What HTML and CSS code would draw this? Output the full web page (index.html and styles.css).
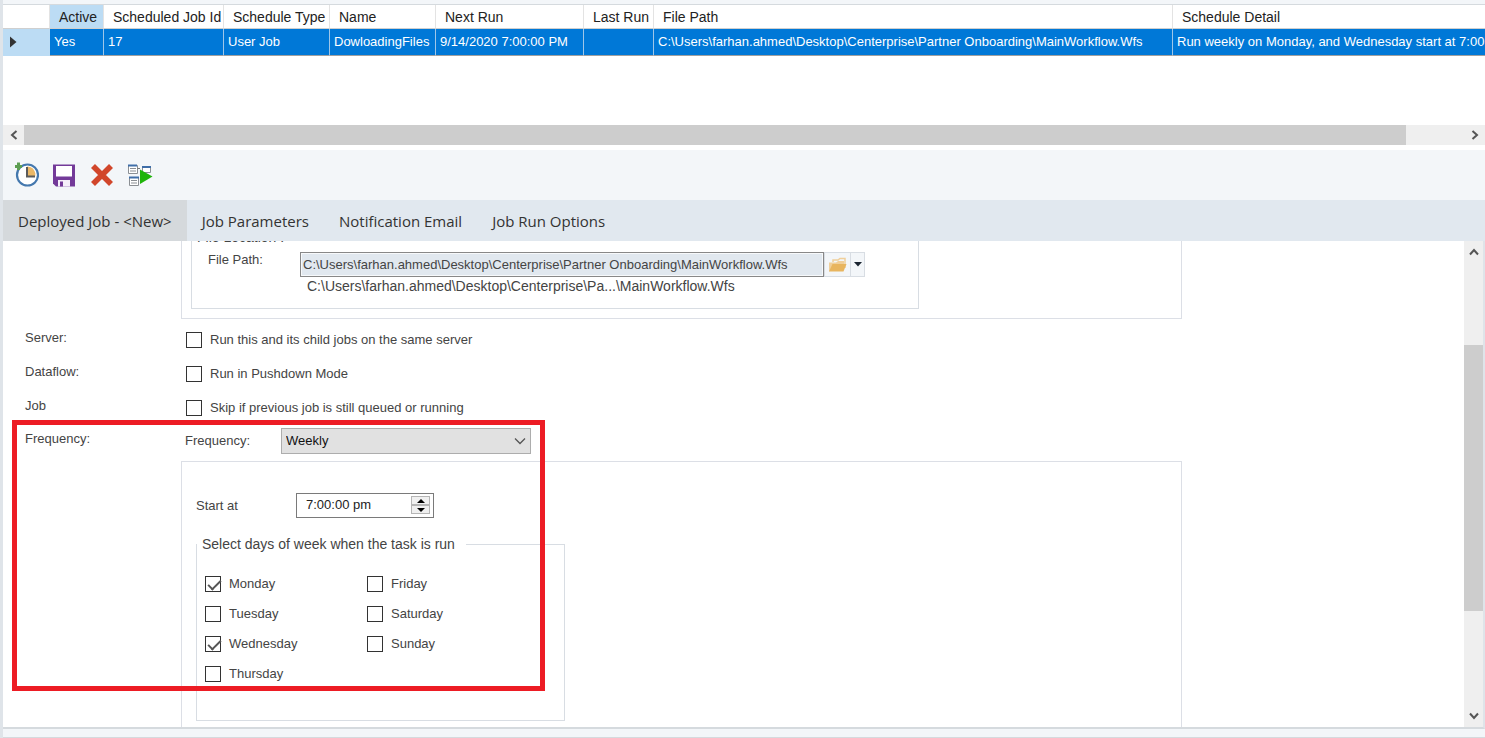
FILE: index.html
```html
<!DOCTYPE html>
<html lang="en">
<head>
    <meta charset="UTF-8">
    <meta name="viewport" content="width=device-width, initial-scale=1.0">
    <title>Job Scheduler</title>
    <link rel="stylesheet" href="styles.css">
</head>
<body>
    <div class="app">
        <div class="grid">
            <table class="jobs">
                <colgroup>
                    <col class="col-marker">
                    <col class="col-active">
                    <col class="col-id">
                    <col class="col-type">
                    <col class="col-name">
                    <col class="col-next">
                    <col class="col-last">
                    <col class="col-path">
                    <col class="col-detail">
                </colgroup>
                <thead>
                    <tr>
                        <th></th>
                        <th class="current">Active</th>
                        <th>Scheduled Job Id</th>
                        <th>Schedule Type</th>
                        <th>Name</th>
                        <th>Next Run</th>
                        <th>Last Run</th>
                        <th>File Path</th>
                        <th>Schedule Detail</th>
                    </tr>
                </thead>
                <tbody>
                    <tr>
                        <td class="marker"><svg width="8" height="12" viewBox="0 0 8 12"><path d="M1 0.5L7.5 6L1 11.5Z" fill="#333"/></svg></td>
                        <td>Yes</td>
                        <td>17</td>
                        <td>User Job</td>
                        <td>DowloadingFiles</td>
                        <td>9/14/2020 7:00:00 PM</td>
                        <td></td>
                        <td>C:\Users\farhan.ahmed\Desktop\Centerprise\Partner Onboarding\MainWorkflow.Wfs</td>
                        <td>Run weekly on Monday, and Wednesday start at 7:00 PM</td>
                    </tr>
                </tbody>
            </table>
        </div>
        <div class="hscroll">
            <button type="button" class="arrow" aria-label="Scroll left"><svg width="10" height="10" viewBox="0 0 10 10"><path d="M7.5 1L3 5L7.5 9"/></svg></button>
            <div class="track"><div class="thumb"></div></div>
            <button type="button" class="arrow" aria-label="Scroll right"><svg width="10" height="10" viewBox="0 0 10 10"><path d="M2.5 1L7 5L2.5 9"/></svg></button>
        </div>

        <div class="toolbar">
            <button type="button" aria-label="New job">
                <svg width="26" height="26" viewBox="0 0 26 26">
                    <circle cx="14.5" cy="13" r="10.5" fill="#fff" stroke="#4478ae" stroke-width="2.2"/>
                    <path d="M14 4.500A8 8 0 0 1 22 15H14Z" fill="#ebb867"/>
                    <path d="M14 5V14.500H22" fill="none" stroke="#5b5b5b" stroke-width="2"/>
                    <path d="M5.500 0.500V8M2 4.500H9" stroke="#5c9e52" stroke-width="3"/>
                </svg>
            </button>
            <button type="button" aria-label="Save">
                <svg width="26" height="26" viewBox="0 0 26 26">
                    <path d="M2 2.500H24V24.500H5L2 21.500Z" fill="#733a99"/>
                    <path d="M5 4H21V14.500H5Z" fill="#fff"/>
                    <path d="M7 18H19V24.500H7Z" fill="#f5effa"/>
                    <path d="M9 19.500H12V24.500H9Z" fill="#733a99"/>
                </svg>
            </button>
            <button type="button" aria-label="Delete">
                <svg width="26" height="26" viewBox="0 0 26 26">
                    <path d="M4 4L22 22M22 4L4 22" stroke="#d1462b" stroke-width="5.600"/>
                </svg>
            </button>
            <button type="button" aria-label="Run job">
                <svg width="26" height="26" viewBox="0 0 26 26">
                    <path d="M1.500 3.500H10.500V11.500H1.500Z" fill="#fff" stroke="#8b8f94"/>
                    <path d="M1 3.500H10" stroke="#3f6ea8" stroke-width="2"/>
                    <path d="M3 6.500H9M3 9H9" stroke="#8b8f94"/>
                    <path d="M10.500 6.500H13" stroke="#777"/>
                    <path d="M15.500 5.500H23.500V10.500H15.500Z" fill="#fff" stroke="#8b8f94"/>
                    <path d="M15 5H24" stroke="#3f6ea8" stroke-width="2"/>
                    <path d="M2.500 15.500H11.500V23.500H2.500Z" fill="#fff" stroke="#8b8f94"/>
                    <path d="M2 15.500H12" stroke="#3f6ea8" stroke-width="2"/>
                    <path d="M4 18.500H10M4 21H10" stroke="#8b8f94"/>
                    <path d="M13 7.500L25.500 14.500L13 22Z" fill="#1fb40a"/>
                </svg>
            </button>
        </div>

        <nav class="tabs">
            <a href="#" class="active">Deployed Job - &lt;New&gt;</a>
            <a href="#">Job Parameters</a>
            <a href="#">Notification Email</a>
            <a href="#">Job Run Options</a>
        </nav>

        <div class="panel">
            <form class="form">
                <div class="row">
                    <span></span>
                    <div class="group file-group">
                        <fieldset class="location">
                            <legend>File Location :</legend>
                            <div class="path-row">
                                <label for="path">File Path:</label>
                                <input type="text" id="path" value="C:\Users\farhan.ahmed\Desktop\Centerprise\Partner Onboarding\MainWorkflow.Wfs">
                                <button type="button" class="browse" aria-label="Browse">
                                    <svg width="20" height="18" viewBox="0 0 20 18">
                                        <path d="M5 6V4H10L12 2.500H17V12" fill="none" stroke="#f0cf9a" stroke-width="1.500"/>
                                        <path d="M1 15.500V6.500H8L10 5H16V9" fill="#f0cf9a"/>
                                        <path d="M1 15.500L4.500 8H18.500L15.500 15.500Z" fill="#e8b55f"/>
                                    </svg>
                                </button>
                                <button type="button" class="browse more" aria-label="More">
                                    <svg width="8" height="5" viewBox="0 0 8 5"><path d="M0 0H8L4 4.500Z" fill="#1a2430"/></svg>
                                </button>
                            </div>
                            <div class="hint">C:\Users\farhan.ahmed\Desktop\Centerprise\Pa...\MainWorkflow.Wfs</div>
                        </fieldset>
                    </div>
                </div>

                <div class="row option">
                    <span class="name">Server:</span>
                    <label class="check"><input type="checkbox">Run this and its child jobs on the same server</label>
                </div>
                <div class="row option">
                    <span class="name">Dataflow:</span>
                    <label class="check"><input type="checkbox">Run in Pushdown Mode</label>
                </div>
                <div class="row option">
                    <span class="name">Job</span>
                    <label class="check"><input type="checkbox">Skip if previous job is still queued or running</label>
                </div>

                <div class="frequency">
                    <div class="row option">
                        <span class="name">Frequency:</span>
                        <div class="select-row">
                            <label for="frequency">Frequency:</label>
                            <div class="select">
                                <select id="frequency">
                                    <option>Weekly</option>
                                </select>
                                <svg width="12" height="8" viewBox="0 0 12 8"><path d="M1 1.500L6 6.500L11 1.500" fill="none" stroke="#555" stroke-width="1.300"/></svg>
                            </div>
                        </div>
                    </div>
                    <div class="row">
                        <span></span>
                        <div class="group schedule">
                            <div class="start-row">
                                <label for="start">Start at</label>
                                <div class="time">
                                    <input type="text" id="start" value="7:00:00 pm">
                                    <div class="spin">
                                        <button type="button" aria-label="Later"><svg width="8" height="4" viewBox="0 0 8 4"><path d="M0 4L4 0L8 4Z"/></svg></button>
                                        <button type="button" aria-label="Earlier"><svg width="8" height="4" viewBox="0 0 8 4"><path d="M0 0H8L4 4Z"/></svg></button>
                                    </div>
                                </div>
                            </div>
                            <fieldset class="days">
                                <legend>Select days of week when the task is run</legend>
                                <div class="day-list">
                                    <label class="check"><input type="checkbox" checked>Monday</label>
                                    <label class="check"><input type="checkbox">Tuesday</label>
                                    <label class="check"><input type="checkbox" checked>Wednesday</label>
                                    <label class="check"><input type="checkbox">Thursday</label>
                                    <label class="check"><input type="checkbox">Friday</label>
                                    <label class="check"><input type="checkbox">Saturday</label>
                                    <label class="check"><input type="checkbox">Sunday</label>
                                </div>
                            </fieldset>
                        </div>
                    </div>
                    <div class="highlight"></div>
                </div>
            </form>
            <div class="vscroll">
                <button type="button" class="arrow" aria-label="Scroll up"><svg width="10" height="10" viewBox="0 0 10 10"><path d="M1 7.500L5 3L9 7.500"/></svg></button>
                <div class="track"><div class="thumb"></div></div>
                <button type="button" class="arrow" aria-label="Scroll down"><svg width="10" height="10" viewBox="0 0 10 10"><path d="M1 2.500L5 7L9 2.500"/></svg></button>
            </div>
        </div>
        <div class="status"></div>
    </div>
</body>
</html>
```

FILE: styles.css
```css
* {
    box-sizing: border-box;
}
body {
    margin: 0;
    background-color: #f3f6f9;
    color: #444;
    font-family: "Liberation Sans", Arial, sans-serif;
    font-size: 13px;
    line-height: 16px;
}
button, input, select {
    margin: 0;
    padding: 0;
    border: none;
    background: none;
    color: inherit;
    font: inherit;
}
svg {
    display: block;
}
.app {
    display: flex;
    flex-direction: column;
    height: 100vh;
    padding-top: 4px;
    border-left: 3px solid #dfe4e9;
    overflow: hidden;
}

/* job list */
.grid {
    height: 121px;
    border-top: 1px solid #d5dade;
    background: #fff;
    overflow: hidden;
}
.jobs {
    width: 1700px;
    table-layout: fixed;
    border-collapse: separate;
    border-spacing: 0;
}
.col-marker { width: 47px; }
.col-active { width: 54px; }
.col-id { width: 120px; }
.col-type { width: 106px; }
.col-name { width: 106px; }
.col-next { width: 148px; }
.col-last { width: 70px; }
.col-path { width: 519px; }
.jobs th {
    height: 24px;
    padding: 0 0 0 9px;
    border-right: 1px solid #e3e3e3;
    border-bottom: 1px solid #cfcfcf;
    color: #222;
    font-size: 14px;
    font-weight: normal;
    text-align: left;
    white-space: nowrap;
}
.jobs th.current {
    background: #bcdcf4;
}
.jobs td {
    height: 27px;
    padding: 0 0 0 4px;
    border-right: 1px solid #9fc6e8;
    border-bottom: 1px solid #a0a0a0;
    background: #0078d7;
    color: #fff;
    white-space: nowrap;
}
.jobs td.marker {
    padding-left: 6px;
    border-color: #bcdcf4;
    background: #bcdcf4;
}

/* scroll bars */
.hscroll {
    display: flex;
    height: 20px;
    background: #efefef;
}
.vscroll {
    display: flex;
    flex-direction: column;
    width: 19px;
    background: #efefef;
}
.track {
    flex: 1;
}
.thumb {
    background: #cdcdcd;
}
.hscroll .thumb {
    width: 96%;
    height: 100%;
}
.vscroll .track {
    display: flex;
    flex-direction: column;
}
.vscroll .track::before {
    content: "";
    flex: 83;
}
.vscroll .track::after {
    content: "";
    flex: 95;
}
.vscroll .thumb {
    flex: 269;
}
.arrow {
    display: flex;
    align-items: center;
    justify-content: center;
    min-width: 19px;
    min-height: 20px;
}
.hscroll .arrow {
    min-width: 21px;
}
.vscroll .arrow {
    min-height: 22px;
}
.arrow path {
    fill: none;
    stroke: #555;
    stroke-width: 2;
}

.toolbar {
    display: flex;
    align-items: center;
    gap: 12px;
    height: 55px;
    padding-left: 10px;
    border-top: 5px solid #fff;
}
.tabs {
    display: flex;
    height: 41px;
    background: #e1e8ef;
    font-family: "Open Sans", "Noto Sans", sans-serif;
    font-size: 15px;
}
.tabs a {
    display: flex;
    align-items: center;
    padding: 0 15px;
    color: #333;
    text-decoration: none;
    white-space: nowrap;
}
.tabs a.active {
    background: #d5d9dc;
}

/* form */
.panel {
    display: flex;
    flex: 1;
    min-height: 0;
    border-right: 2px solid #dfe4e9;
    border-bottom: 2px solid #d5dade;
    background: #fff;
}
.form {
    flex: 1;
    overflow: hidden;
}
.row {
    display: grid;
    grid-template-columns: 156px 1fr;
    padding: 0 282px 0 22px;
}
.option {
    align-items: center;
    height: 34px;
}
.name {
    padding-bottom: 4px;
}
.group {
    border: 1px solid #dcdfe6;
}
fieldset {
    min-width: 0;
    margin: 0;
    padding: 0;
    border: 1px solid #d8dde3;
}
legend {
    padding: 0 5px;
    font-size: 14px;
}
.file-group {
    margin: -20px 0 4px;
    padding: 7px 9px 9px;
}
.location {
    max-width: 728px;
    padding: 7px 0 14px;
}
.path-row {
    display: flex;
    padding-left: 16px;
}
.path-row label {
    width: 92px;
}
.path-row input {
    width: 524px;
    height: 25px;
    padding: 0 2px;
    border: 1px solid #888;
    box-shadow: inset 0 0 0 1px #f7f9fb;
    background: #e1e8ef;
}
.browse {
    display: flex;
    align-items: center;
    justify-content: center;
    width: 27px;
    height: 25px;
    border: 1px solid #d8dde3;
    background: #f3f6f9;
}
.browse.more {
    width: 14px;
    border-left: none;
}
.hint {
    padding: 1px 0 0 115px;
    font-size: 14px;
}
.check {
    display: flex;
    align-items: center;
    gap: 8px;
}
.option .check {
    padding-left: 5px;
}
.check input {
    appearance: none;
    width: 16px;
    height: 16px;
    border: 1px solid #333;
    background: #fff;
}
.check input:checked::after {
    content: "";
    display: block;
    width: 11px;
    height: 5px;
    margin: 3px 0 0 2px;
    border: solid #555;
    border-width: 0 0 2px 2px;
    transform: rotate(-45deg);
}
.frequency {
    position: relative;
}
.frequency .option {
    height: 32px;
}
.select-row {
    display: flex;
    align-items: center;
    padding-left: 4px;
}
.select-row label {
    width: 96px;
}
.select {
    display: grid;
    align-items: center;
    width: 250px;
}
.select select, .select svg {
    grid-area: 1 / 1;
}
.select select {
    appearance: none;
    height: 26px;
    padding: 0 4px;
    border: 1px solid #adadad;
    background: #e1e1e1;
    color: #111;
}
.select svg {
    justify-self: end;
    margin-right: 5px;
    pointer-events: none;
}
.schedule {
    height: 300px;
    margin-top: 4px;
    padding: 31px 14px;
}
.start-row {
    display: flex;
    align-items: center;
    margin-bottom: 18px;
}
.start-row label {
    width: 100px;
}
.time {
    display: flex;
    width: 138px;
    height: 25px;
    padding: 2px 3px 3px 9px;
    border: 1px solid #7a7a7a;
}
.time input {
    flex: 1;
    min-width: 0;
    color: #222;
}
.spin {
    display: flex;
    flex-direction: column;
    width: 19px;
}
.spin button {
    display: flex;
    flex: 1;
    align-items: center;
    justify-content: center;
    border: 1px solid #b5b5b5;
    background: #f0f0f0;
}
.days {
    width: 369px;
    padding: 17px 0 31px;
}
.days legend {
    padding-right: 11px;
}
.day-list {
    display: grid;
    grid-template-rows: repeat(4, 30px);
    grid-auto-flow: column;
    grid-auto-columns: 162px;
    padding-left: 8px;
}

/* callout around the frequency settings */
.highlight {
    position: absolute;
    top: -5px;
    left: 9px;
    width: 533px;
    height: 271px;
    border: 5px solid #ed1c24;
    pointer-events: none;
}
.status {
    height: 9px;
    border-bottom: 1px solid #d5dade;
}
```
